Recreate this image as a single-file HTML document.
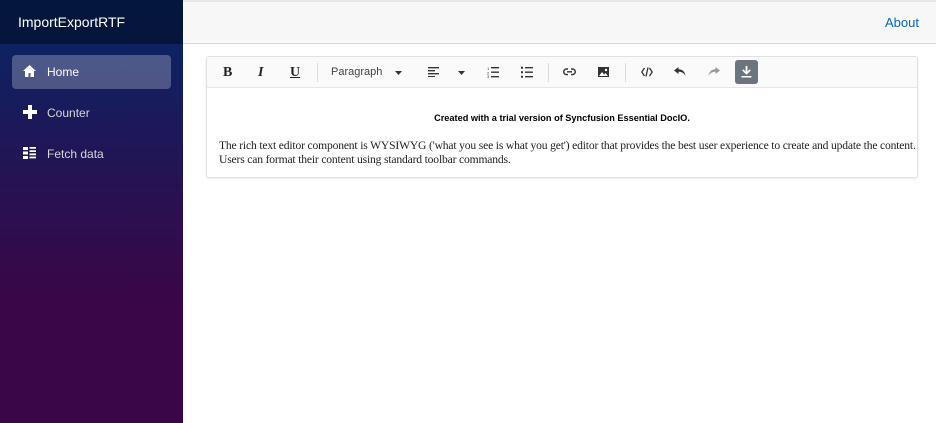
<!DOCTYPE html>
<html><head><style>
*{margin:0;padding:0;box-sizing:border-box}
body{width:936px;height:423px;overflow:hidden;font-family:"Liberation Sans",sans-serif;background:#fff;position:relative}
.side{position:absolute;left:0;top:0;width:183px;height:423px;background:linear-gradient(180deg,#052767 0%,#3a0647 70%)}
.brand{height:44px;background:rgba(0,0,0,0.4);color:#fff;font-size:14px;line-height:44px;padding-left:18px}
.nav{position:absolute;left:12px;width:159px;height:34px;border-radius:4px;color:#d7d7d7;font-size:12px;line-height:34px;padding-left:35px}
.nav.act{background:rgba(255,255,255,0.25);color:#fff}
.nav svg{position:absolute;left:11px;top:10px}
.top{position:absolute;left:183px;top:0;right:0;height:44px;background:#f7f7f7;border-bottom:1px solid #d6d5d5;border-top:2px solid #e6e6e6}
.top a{position:absolute;right:17px;top:13px;color:#0366d6;font-size:13px}
.ed{position:absolute;left:206px;top:56px;width:712px;height:122px;border:1px solid #dee2e6;border-radius:3px;box-shadow:0 1px 2px rgba(0,0,0,.08);overflow:hidden}
.tb{height:31px;background:#fafafa;border-bottom:1px solid #e6e6e6;position:relative}
.tb span{position:absolute;top:0;line-height:31px;color:#212529;font-size:14px}
.sep{position:absolute;top:6px;width:1px;height:19px;background:#dcdcdc}
.tb svg{position:absolute}
.cnt{padding:23px 12px 0 12px;font-family:"Liberation Serif",serif;font-size:11.6px;letter-spacing:-0.17px;line-height:14px;color:#222;white-space:nowrap}
.trial{font-family:"Liberation Sans",sans-serif;font-weight:bold;font-size:9.2px;letter-spacing:0;text-align:center;margin-bottom:14px;color:#000}
</style></head><body>
<div class="side">
<div class="brand">ImportExportRTF</div>
<div class="nav act" style="top:55px">Home<svg width="13" height="12" viewBox="0 0 13 12"><path d="M6.5 0L0 6h2v6h3.5V8h2v4H11V6h2z" fill="#fff"/></svg></div>
<div class="nav" style="top:96px">Counter<svg width="14" height="14" viewBox="0 0 14 14" style="top:9px"><path d="M5 0h4v5h5v4H9v5H5V9H0V5h5z" fill="#fff"/></svg></div>
<div class="nav" style="top:137px">Fetch data<svg width="13" height="12" viewBox="0 0 13 12"><path d="M0 0h5v3H0zM0 4.5h5v3H0zM0 9h5v3H0zM6.5 0h6.5v1.8H6.5zM6.5 3.2h6.5v1.8H6.5zM6.5 6.4h6.5v1.8H6.5zM6.5 9.6h6.5v1.8H6.5z" fill="#fff"/></svg></div>
</div>
<div class="top"><a>About</a></div>
<div class="ed">
<div class="tb">
<span style="left:16px;font-family:'Liberation Serif',serif;font-weight:bold">B</span>
<span style="left:51px;font-family:'Liberation Serif',serif;font-style:italic;font-weight:bold">I</span>
<span style="left:83px;font-family:'Liberation Serif',serif;font-weight:bold;text-decoration:underline">U</span>
<div class="sep" style="left:110px"></div>
<span style="left:124px;font-size:11px;color:#444">Paragraph</span>
<svg style="left:188px;top:14px" width="7" height="4"><path d="M0 0h7L3.5 4z" fill="#333"/></svg>
<svg style="left:221px;top:10px" width="11" height="10"><path d="M0 0h11v1.4H0zM0 3h7v1.4H0zM0 6h11v1.4H0zM0 9h7v1.2H0z" fill="#333"/></svg>
<svg style="left:251px;top:14px" width="7" height="4"><path d="M0 0h7L3.5 4z" fill="#333"/></svg>
<svg style="left:280px;top:9px" width="12" height="12"><path d="M4 1h8v1.4H4zM4 5.5h8v1.4H4zM4 10h8v1.4H4z" fill="#333"/><text x="0" y="4" font-size="4" fill="#333">1</text><text x="0" y="8.5" font-size="4" fill="#333">2</text><text x="0" y="12" font-size="4" fill="#333">3</text></svg>
<svg style="left:314px;top:9px" width="12" height="12"><path d="M4 1h8v1.4H4zM4 5.5h8v1.4H4zM4 10h8v1.4H4zM0 0.7h2v2H0zM0 5.2h2v2H0zM0 9.7h2v2H0z" fill="#333"/></svg>
<div class="sep" style="left:341px"></div>
<svg style="left:356px;top:11px" width="13" height="8"><path d="M5 1H3.5a2.8 2.8 0 000 5.6H5M8 1h1.5a2.8 2.8 0 010 5.6H8M4 3.8h5" stroke="#333" stroke-width="1.4" fill="none"/></svg>
<svg style="left:391px;top:10px" width="11" height="10"><rect width="11" height="10" fill="#333"/><path d="M1 9l3-4 2 2.5 1.5-1.5L10 9z" fill="#fff"/><circle cx="8" cy="3" r="1.2" fill="#fff"/></svg>
<div class="sep" style="left:418px"></div>
<svg style="left:434px;top:10px" width="12" height="10"><path d="M3.5 1L0.8 5l2.7 4M8.5 1l2.7 4-2.7 4M7 0.5L5 9.5" stroke="#333" stroke-width="1.3" fill="none"/></svg>
<svg style="left:467px;top:10px" width="12" height="10"><path d="M4.5 0L0 3.5 4.5 7V4.7C8 4.7 10 6 11.5 9 11 5 9 2.4 4.5 2.2z" fill="#333"/></svg>
<svg style="left:501px;top:10px" width="12" height="10"><path d="M7.5 0L12 3.5 7.5 7V4.7C4 4.7 2 6 0.5 9 1 5 3 2.4 7.5 2.2z" fill="#999"/></svg>
<div style="position:absolute;left:528px;top:3px;width:23px;height:24px;background:#6c757d;border-radius:3px"></div>
<svg style="left:534px;top:9px" width="11" height="12"><path d="M4.6 0h1.8v5.5l2.2-2.2 1.2 1.2-4.3 4.2L1.2 4.5l1.2-1.2 2.2 2.2zM0.5 10h10v1.5H.5z" fill="#fff"/></svg>
</div>
<div class="cnt">
<div class="trial">Created with a trial version of Syncfusion Essential DocIO.</div>
<div>The rich text editor component is WYSIWYG ('what you see is what you get') editor that provides the best user experience to create and update the content.<br>Users can format their content using standard toolbar commands.</div>
</div>
</div>
</body></html>
